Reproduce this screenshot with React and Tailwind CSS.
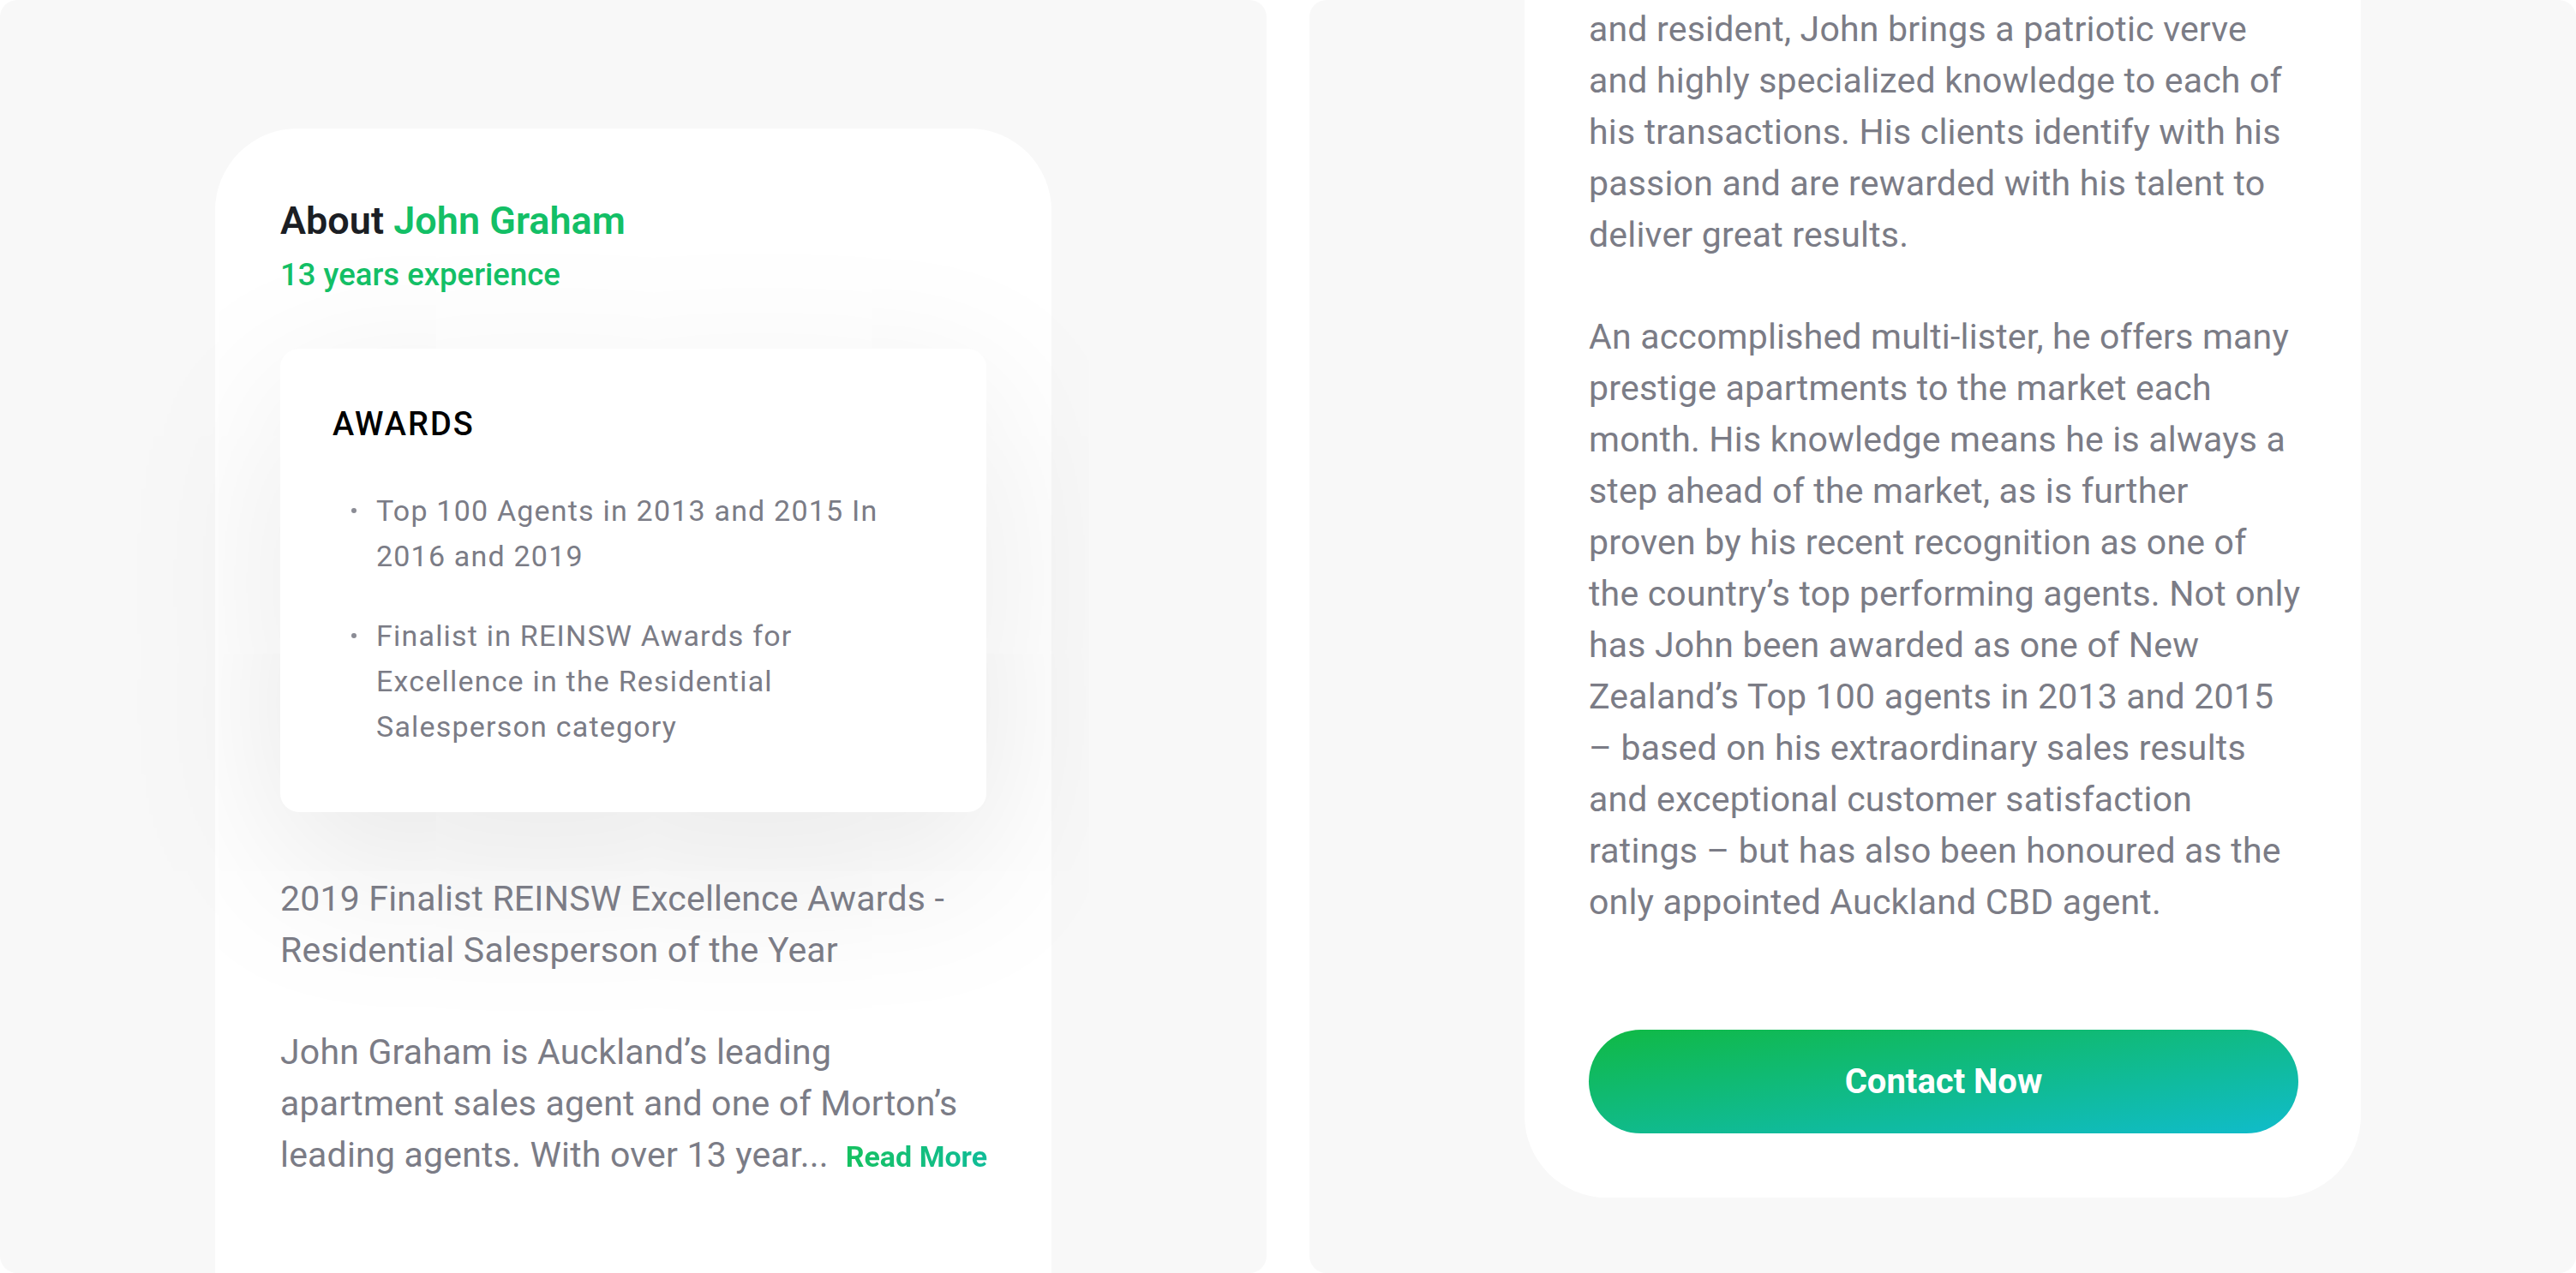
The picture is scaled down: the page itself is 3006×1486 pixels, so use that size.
const awards = [
  ['Top 100 Agents in 2013 and 2015 In', '2016 and 2019'],
  ['Finalist in REINSW Awards for', 'Excellence in the Residential', 'Salesperson category'],
]

const bioTop = [
  'and resident, John brings a patriotic verve',
  'and highly specialized knowledge to each of',
  'his transactions. His clients identify with his',
  'passion and are rewarded with his talent to',
  'deliver great results.',
]

const bioBottom = [
  'An accomplished multi-lister, he offers many',
  'prestige apartments to the market each',
  'month. His knowledge means he is always a',
  'step ahead of the market, as is further',
  'proven by his recent recognition as one of',
  'the country\u2019s top performing agents. Not only',
  'has John been awarded as one of New',
  'Zealand\u2019s Top 100 agents in 2013 and 2015',
  '\u2013 based on his extraordinary sales results',
  'and exceptional customer satisfaction',
  'ratings \u2013 but has also been honoured as the',
  'only appointed Auckland CBD agent.',
]

function Lines({ lines }) {
  return (
    <div className="text-[41px] leading-[60px] tracking-[0.2px] text-[#7b7c86]">
      {lines.map((l, i) => (
        <div key={i} className="whitespace-nowrap">{l}</div>
      ))}
    </div>
  )
}

function AboutCard() {
  return (
    <div className="w-[976px] h-full rounded-t-[96px] bg-white px-[76px] pt-[82px]">
      <h2 className="text-[45px] leading-[52px] font-semibold text-[#1b1e24]">
        About <span className="text-[#13bf66]">John Graham</span>
      </h2>
      <div className="mt-[15px] text-[36.5px] leading-[44px] font-medium text-[#13bf66]">13 years experience</div>

      <div className="mt-[64px] rounded-[22px] bg-white pl-[61px] pr-[70px] pt-[65px] pb-[73px] shadow-[0_60px_200px_rgba(0,0,0,0.1)]">
        <div className="text-[38px] leading-[46px] font-medium tracking-[2px] text-black">AWARDS</div>
        <ul className="mt-[52px] flex flex-col gap-[40px]">
          {awards.map((item, i) => (
            <li key={i} className="flex">
              <span className="ml-[22px] mt-[23px] h-[6px] w-[6px] shrink-0 rounded-full bg-[#8b8c95]" />
              <div className="ml-[23px] text-[34px] leading-[53px] tracking-[1.2px] text-[#7b7c86]">
                {item.map((l, j) => (
                  <div key={j} className="whitespace-nowrap">{l}</div>
                ))}
              </div>
            </li>
          ))}
        </ul>
      </div>

      <div className="mt-[71px]">
        <Lines lines={['2019 Finalist REINSW Excellence Awards -', 'Residential Salesperson of the Year']} />
      </div>

      <div className="mt-[59px] text-[41px] leading-[60px] tracking-[0.2px] text-[#7b7c86]">
        <div className="whitespace-nowrap">John Graham is Auckland&rsquo;s leading</div>
        <div className="whitespace-nowrap">apartment sales agent and one of Morton&rsquo;s</div>
        <div className="whitespace-nowrap">
          leading agents. With over 13 year...
          <a href="#" className="ml-[20px] text-[34px] font-bold tracking-normal bg-[linear-gradient(to_right,#16c160,#10bc98)] bg-clip-text text-transparent">
            Read More
          </a>
        </div>
      </div>
    </div>
  )
}

function BioCard() {
  return (
    <div className="w-[976px] rounded-b-[96px] bg-white px-[75px] pt-[4px] pb-[75px]">
      <Lines lines={bioTop} />
      <div className="mt-[59px]">
        <Lines lines={bioBottom} />
      </div>
      <button className="mt-[119px] flex h-[121px] w-[828px] items-center justify-center rounded-full bg-[linear-gradient(to_bottom_right,#10b944,#10bccc)] text-[40px] font-bold text-white">
        Contact Now
      </button>
    </div>
  )
}

export default function App() {
  return (
    <div className="flex h-[1486px] w-[3006px] gap-[50px] overflow-hidden bg-white font-['Roboto','Noto_Sans',sans-serif]">
      <div className="h-full w-[1478px] shrink-0 overflow-hidden rounded-[20px] bg-[#f8f8f8] pl-[251px] pt-[150px]">
        <AboutCard />
      </div>
      <div className="h-full w-[1478px] shrink-0 overflow-hidden rounded-[20px] bg-[#f8f8f8] pl-[251px]">
        <BioCard />
      </div>
    </div>
  )
}
